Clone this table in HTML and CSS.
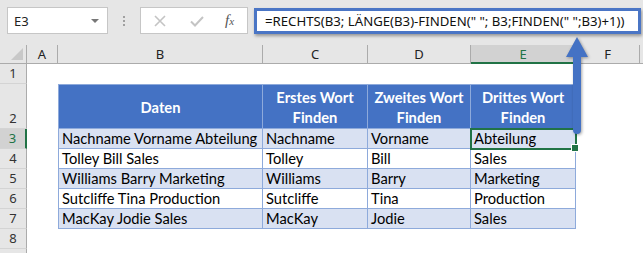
FILE: index.html
```html
<!DOCTYPE html>
<html lang="de">
<head>
  <meta charset="UTF-8">
  <meta name="viewport" content="width=device-width, initial-scale=1.0">
  <title>RECHTS / FINDEN</title>
  <link rel="stylesheet" href="styles.css">
</head>
<body>
 <div class="app">
  <div class="toolbar">
    <div class="namebox"><span>E3</span><span class="caret"></span></div>
    <div class="dots"><i></i><i></i><i></i></div>
    <div class="fxbox">
      <svg class="cancel" width="14" height="14" viewBox="0 0 14 14"><path d="M2 2 L12 12 M12 2 L2 12" stroke="#c4c4c4" stroke-width="1.6" fill="none"/></svg>
      <svg class="enter" width="16" height="14" viewBox="0 0 16 14"><path d="M2 7.5 L6 11.5 L14 3" stroke="#c4c4c4" stroke-width="2" fill="none"/></svg>
      <span class="fx">f<sub>x</sub></span>
    </div>
    <div class="formula">=RECHTS(B3; LÄNGE(B3)-FINDEN(" "; B3;FINDEN(" ";B3)+1))</div>
  </div>

  <div class="sheet">
    <!-- column letters -->
    <div class="corner"></div>
    <div class="ch">A</div>
    <div class="ch">B</div>
    <div class="ch">C</div>
    <div class="ch">D</div>
    <div class="ch sel">E</div>
    <div class="ch">F</div>
    <div class="ch last"></div>

    <!-- row 1 -->
    <div class="rh">1</div>
    <div class="c"></div><div class="c"></div><div class="c"></div><div class="c"></div><div class="c"></div><div class="c"></div><div class="c"></div>

    <!-- row 2: table head -->
    <div class="rh tall">2</div>
    <div class="c"></div>
    <div class="t th first">Daten</div>
    <div class="t th">Erstes Wort<br>Finden</div>
    <div class="t th">Zweites Wort<br>Finden</div>
    <div class="t th">Drittes Wort<br>Finden</div>
    <div class="c"></div><div class="c"></div>

    <div class="rh sel">3</div>
    <div class="c"></div>
    <div class="t band first">Nachname Vorname Abteilung</div>
    <div class="t band">Nachname</div>
    <div class="t band">Vorname</div>
    <div class="t band active">Abteilung</div>
    <div class="c"></div><div class="c"></div>

    <div class="rh">4</div>
    <div class="c"></div>
    <div class="t first">Tolley Bill Sales</div>
    <div class="t">Tolley</div>
    <div class="t">Bill</div>
    <div class="t">Sales</div>
    <div class="c"></div><div class="c"></div>

    <div class="rh">5</div>
    <div class="c"></div>
    <div class="t band first">Williams Barry Marketing</div>
    <div class="t band">Williams</div>
    <div class="t band">Barry</div>
    <div class="t band">Marketing</div>
    <div class="c"></div><div class="c"></div>

    <div class="rh">6</div>
    <div class="c"></div>
    <div class="t first">Sutcliffe Tina Production</div>
    <div class="t">Sutcliffe</div>
    <div class="t">Tina</div>
    <div class="t">Production</div>
    <div class="c"></div><div class="c"></div>

    <div class="rh">7</div>
    <div class="c"></div>
    <div class="t band first">MacKay Jodie Sales</div>
    <div class="t band">MacKay</div>
    <div class="t band">Jodie</div>
    <div class="t band">Sales</div>
    <div class="c"></div><div class="c"></div>

    <div class="rh">8</div>
    <div class="c"></div><div class="c"></div><div class="c"></div><div class="c"></div><div class="c"></div><div class="c"></div><div class="c"></div>

    <div class="rh"></div>
    <div class="c"></div><div class="c"></div><div class="c"></div><div class="c"></div><div class="c"></div><div class="c"></div><div class="c"></div>
  </div>

  <!-- pointer from the formula up to the bar -->
  <svg class="arrow" width="30" height="104" viewBox="0 0 30 104">
    <path d="M15 1 L26 21 L19 21 L19 94 Q19 98 15 98 Q11 98 11 94 L11 21 L4 21 Z" fill="#4472c4"/>
  </svg>
 </div>
</body>
</html>
```

FILE: styles.css
```css
*{
  box-sizing: border-box;
}
body{
  margin: 0;
  background: #fff;
  font-family: "Noto Sans", sans-serif;
}
.app{
  position: relative;
  width: 643px;
  height: 253px;
  overflow: hidden;
}

/* formula bar row */
.toolbar{
  height: 45px;
  background: #e6e6e6;
  display: flex;
  align-items: flex-start;
  padding: 7px 0 0 7px;
}
.namebox{
  width: 101px;
  height: 27px;
  background: #fff;
  border: 1px solid #c6c6c6;
  display: flex;
  align-items: center;
  justify-content: space-between;
  padding: 0 8px 0 6px;
  font-size: 13px;
  color: #222;
}
.caret{
  width: 0;
  height: 0;
  border-left: 4px solid transparent;
  border-right: 4px solid transparent;
  border-top: 4px solid #777;
}
.dots{
  width: 32px;
  height: 27px;
  display: flex;
  flex-direction: column;
  align-items: center;
  justify-content: center;
  gap: 2px;
}
.dots i{
  width: 2px;
  height: 2px;
  background: #a0a0a0;
}
.fxbox{
  width: 108px;
  height: 27px;
  background: #fff;
  border: 1px solid #c6c6c6;
  display: flex;
  align-items: center;
  padding: 0 0 0 12px;
  gap: 0;
}
.cancel{
  margin-right: 22px;
}
.enter{
  margin-right: 20px;
}
.fx{
  font-family: "Liberation Serif", serif;
  font-style: italic;
  font-size: 15px;
  color: #555;
}
.fx sub{
  font-size: 11px;
  vertical-align: 0;
}
.formula{
  margin-left: 6px;
  margin-top: 1px;
  width: 387px;
  height: 26px;
  background: #fff;
  border: 3px solid #4a75c5;
  box-shadow: 1px 2px 3px rgba(0,0,0,.35);
  font-size: 13.2px;
  line-height: 20px;
  padding-left: 8px;
  color: #111;
  white-space: nowrap;
}

/* sheet grid */
.sheet{
  display: grid;
  grid-template-columns: 27px 31px 205px 105px 103px 105px 64px 1fr;
  grid-template-rows: 19px 20px 45px repeat(7, 20px);
  font-family: "Lato", sans-serif;
  font-size: 14.7px;
}
.corner{
  background: #e6e6e6;
  border-right: 1px solid #ababab;
  border-bottom: 1px solid #ababab;
  position: relative;
}
.corner::after{
  content: "";
  position: absolute;
  right: 3px;
  bottom: 3px;
  border-left: 12px solid transparent;
  border-bottom: 12px solid #c8c8c8;
}
.ch{
  background: #e6e6e6;
  border-right: 1px solid #ababab;
  border-bottom: 1px solid #ababab;
  text-align: center;
  font-family: "Noto Sans", sans-serif;
  font-size: 13px;
  line-height: 18px;
  color: #222;
}
.ch.last{
  border-right: none;
}
.ch.sel{
  background: #d2d2d2;
  border-bottom: 2px solid #217346;
  color: #217346;
}
.rh{
  background: #e6e6e6;
  border-right: 1px solid #ababab;
  border-bottom: 1px solid #d4d4d4;
  text-align: center;
  font-family: "Noto Sans", sans-serif;
  font-size: 13px;
  line-height: 19px;
  color: #333;
  display: flex;
  align-items: flex-end;
  justify-content: center;
}
.rh.sel{
  background: #d2d2d2;
  border-right: 2px solid #217346;
  color: #217346;
}
.c{
  background: #fff;
}

/* formatted table */
.t{
  border-right: 1px solid #8eaadb;
  border-bottom: 1px solid #8eaadb;
  padding: 0 3px;
  line-height: 19px;
  white-space: nowrap;
  color: #000;
  display: flex;
  align-items: flex-end;
}
.t.first{
  border-left: 1px solid #8eaadb;
}
.th{
  border-top: 1px solid #8eaadb;
  background: #4472c4;
  color: #fff;
  font-weight: bold;
  text-align: center;
  justify-content: center;
  align-items: center;
  line-height: 20px;
}
.band{
  background: #d9e1f2;
}
.active{
  position: relative;
  outline: 2px solid #217346;
  outline-offset: -1px;
  z-index: 1;
}
.active::after{
  content: "";
  position: absolute;
  right: -4px;
  bottom: -4px;
  width: 6px;
  height: 6px;
  background: #217346;
  border: 1px solid #fff;
}

.arrow{
  position: absolute;
  left: 562px;
  top: 36px;
  filter: drop-shadow(1px 1px 1.5px rgba(0,0,0,.35));
  z-index: 2;
}
```
